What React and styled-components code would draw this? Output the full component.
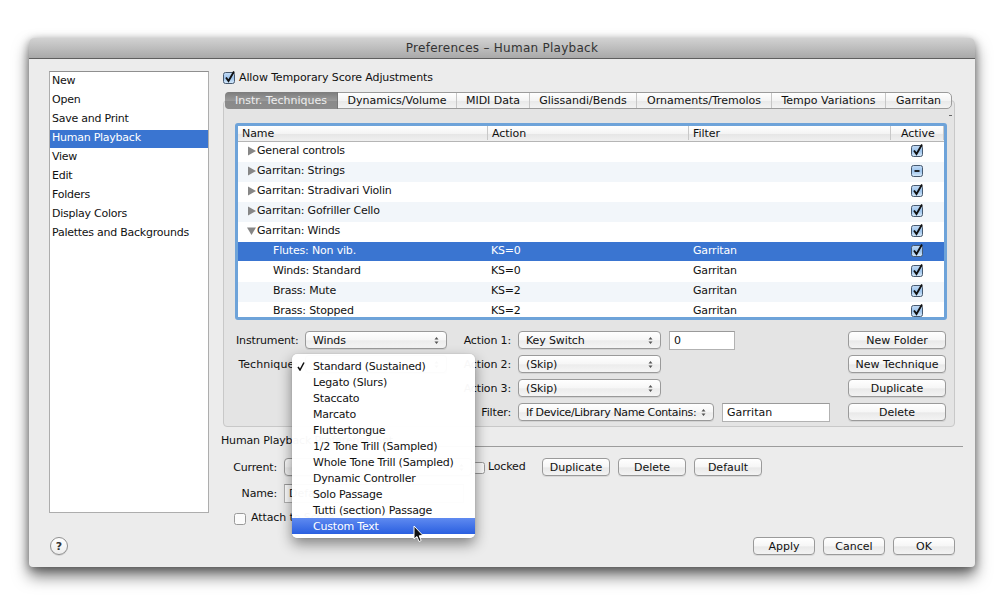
import React from 'react';
import styled, { createGlobalStyle } from 'styled-components';

const Global = createGlobalStyle`
  html, body { margin: 0; padding: 0; background: #fff; }
  body { font-family: "DejaVu Sans", "Liberation Sans", sans-serif; font-size: 11px; color: #111; }
  * { box-sizing: border-box; }
`;

const Page = styled.div`
  width: 1005px; height: 603px; padding: 38px 30px 36px 29px; overflow: hidden;
`;
const Window = styled.div`
  position: relative; width: 946px; height: 529px; display: flex; flex-direction: column;
  background: #ececec; border-radius: 5px 5px 4px 4px;
  box-shadow: 0 9px 16px rgba(0,0,0,.55), 0 2px 8px rgba(0,0,0,.35);
`;
const TitleBar = styled.div`
  height: 21px; flex: none; display: flex; align-items: center; justify-content: center;
  background: linear-gradient(#d2d2d2, #a9a9a9); border-bottom: 1px solid #5f5f5f;
  border-radius: 5px 5px 0 0; font-size: 12px; letter-spacing: .27px; color: #333;
`;
const Content = styled.div`
  flex: 1; display: flex; gap: 12px; padding: 12px 12px 0 20px; min-height: 0;
`;
const Sidebar = styled.ul`
  list-style: none; margin: 0; padding: 1px 0 0; width: 160px; height: 442px; flex: none;
  background: #fff; border: 1px solid #adadad; border-top-color: #8f8f8f;
`;
const SideItem = styled.li`
  height: 19px; padding: 0 2px; line-height: 16px; letter-spacing: -.25px;
  background: ${p => p.$on ? 'linear-gradient(#3a75d1 0 18px, #fff 18px)' : 'transparent'};
  color: ${p => p.$on ? '#fff' : '#111'};
`;
const Main = styled.div`flex: 1; min-width: 0; display: flex; flex-direction: column;`;
const AllowRow = styled.label`
  display: flex; align-items: center; gap: 2px; height: 16px; margin: -2px 0 7px 1px; letter-spacing: -.12px;
`;
const Panel = styled.div`
  position: relative; margin: 8px 8px 0 2px; height: 327px; padding: 0 7px 0 11px;
  background: #e4e4e4; border: 1px solid #c8c8c8; border-radius: 4px;
`;
const Tabs = styled.div`
  display: flex; width: 727px; height: 17px; margin: -9px 0 14px -10px;
  background: linear-gradient(#fff, #f4f4f4 50%, #e9e9e9 55%, #f3f3f3);
  border: 1px solid #9b9b9b; border-radius: 5px;
`;
const Tab = styled.div`
  width: ${p => p.$w}px; flex: none; display: flex; align-items: center; justify-content: center;
  color: ${p => p.$on ? '#eee' : '#111'};
  background: ${p => p.$on ? 'linear-gradient(#7c7c7c, #9a9a9a 50%, #8a8a8a 55%, #8c8c8c)' : 'transparent'};
  border-right: 1px solid ${p => p.$on ? '#777' : p.$last ? 'transparent' : '#c6c6c6'};
  border-radius: ${p => p.$on ? '4px 0 0 4px' : '0'};
  margin: ${p => p.$on ? '-1px 0 -1px -1px' : '0'};
  padding-bottom: 1px;
`;
const TabMark = styled.span`
  position: absolute; right: 2px; top: 14px; width: 3px; height: 1px; background: #666;
`;
const Table = styled.div`
  width: 712px; height: 197px; overflow: hidden; background: #fff;
  border: 3px solid #6ea3d9; border-radius: 3px;
`;
const HeaderRow = styled.div`
  display: flex; height: 16px; padding-bottom: 1px;
  background: linear-gradient(#fff, #f4f4f4 50%, #e6e6e6 55%, #f0f0f0);
  border-bottom: 1px solid #b5b5b5;
`;
const HeadCell = styled.div`
  width: ${p => p.$w}px; flex: none; padding-left: ${p => p.$pad}px; line-height: 16px;
  letter-spacing: -.05px; border-right: 1px solid #c8c8c8;
`;
const Row = styled.div`
  display: flex; height: 20px; align-items: flex-start; letter-spacing: -.18px;
  background: ${p => p.$sel ? 'linear-gradient(#3a75d1 0 19px, #fff 19px)' : p.$alt ? '#f2f6fa' : '#fff'};
  color: ${p => p.$sel ? '#fff' : '#111'};
`;
const NameCell = styled.div`
  width: 251px; flex: none; display: flex; align-items: center; height: 16px;
  padding-left: ${p => p.$child ? 35 : 9}px;
`;
const Disclosure = styled.span`
  width: 10px; flex: none; display: flex; align-items: center; margin-top: 2px;
`;
const ActionCell = styled.div`width: 202px; flex: none; line-height: 17px; padding-left: 2px;`;
const FilterCell = styled.div`width: 219px; flex: none; line-height: 17px; padding-left: 2px;`;
const ActiveCell = styled.div`width: 15px; height: 16px; margin-top: 1px; flex: none; display: flex;`;
const Form = styled.div`display: flex; margin: 11px 0 0 1px;`;
const LeftCol = styled.div`width: 211px; flex: none; display: flex; flex-direction: column; gap: 6px;`;
const MidCol = styled.div`width: 367px; margin-left: 16px; flex: none; display: flex; flex-direction: column; gap: 6px;`;
const ButtonCol = styled.div`width: 98px; margin-left: 18px; flex: none; display: flex; flex-direction: column; gap: 6px;`;
const FormRow = styled.div`display: flex; align-items: center; height: 18px; gap: 7px;`;
const FieldLabel = styled.span`
  width: ${p => p.$w}px; flex: none; text-align: right; white-space: nowrap; letter-spacing: ${p => p.$wide ? '.05px' : '-.15px'};
  padding-top: ${p => p.$flat ? 0 : 1}px;
`;
const Select = styled.div`
  width: ${p => p.$w}px; height: 18px; flex: none; display: flex; align-items: center; justify-content: space-between;
  margin-left: ${p => p.$ml || 0}px; padding: 0 7px 0 7px; white-space: nowrap; overflow: hidden;
  letter-spacing: ${p => p.$tight ? '-.36px' : '-.12px'};
  background: linear-gradient(#fff, #f6f6f6 50%, #ececec 55%, #f5f5f5);
  border: 1px solid #9a9a9a; border-radius: 4px; box-shadow: 0 1px 0 rgba(0,0,0,.08);
`;
const Input = styled.div`
  width: ${p => p.$w}px; height: 19px; flex: none; display: flex; align-items: center; padding: 0 3px 0 4px;
  margin-left: ${p => p.$ml || 0}px;
  background: #fff; border: 1px solid #b2b2b2; border-top-color: #9a9a9a; overflow: hidden; white-space: nowrap;
`;
const Button = styled.button`
  width: ${p => p.$w ? p.$w + 'px' : '100%'}; height: 18px; flex: none; padding: 0; margin: 0;
  font: inherit; color: #111; text-align: center;
  background: linear-gradient(#fff, #f6f6f6 50%, #e9e9e9 55%, #f3f3f3);
  border: 1px solid #9a9a9a; border-radius: 4px; box-shadow: 0 1px 0 rgba(0,0,0,.08);
`;
const Group = styled.div`display: flex; flex-direction: column;`;
const GroupHead = styled.div`display: flex; height: 16px; margin-top: 7px; white-space: nowrap; gap: 4px; letter-spacing: -.15px;`;
const GroupLine = styled.div`flex: 1; height: 6px; border-bottom: 1px solid #9c9c9c; margin-top: 7px;`;
const GroupRow = styled.div`
  display: flex; align-items: center; height: 18px; margin-top: ${p => p.$top}px; padding-left: ${p => p.$pad}px;
`;
const LockedLabel = styled.span`width: 54px; flex: none; margin-left: 1px; letter-spacing: -.15px; padding-bottom: 1px;`;
const AttachLabel = styled.span`margin-left: 3px; letter-spacing: -.1px; padding-bottom: 2px;`;
const Footer = styled.div`
  flex: none; height: 30px; display: flex; align-items: flex-start; justify-content: space-between; padding: 0 20px 12px 21px;
`;
const Help = styled.div`
  width: 18px; height: 18px; border-radius: 50%; display: flex; align-items: center; justify-content: center;
  background: linear-gradient(#fff, #ededed); border: 1px solid #8f8f8f; font-weight: 700; font-size: 11px; color: #333;
  box-shadow: 0 1px 0 rgba(0,0,0,.1);
`;
const ButtonRow = styled.div`display: flex; gap: 8px;`;
const Menu = styled.div`
  position: absolute; left: 263px; top: 316px; width: 183px; height: 184px; padding: 4px 0;
  background: rgba(255,255,255,.97); border-radius: 5px; box-shadow: 0 6px 14px rgba(0,0,0,.45), 0 0 1px rgba(0,0,0,.3);
`;
const MenuItem = styled.div`
  position: relative; height: 16px; padding-left: 21px; line-height: 17px; white-space: nowrap; letter-spacing: -.2px;
  background: ${p => p.$on ? 'linear-gradient(#5f8af0, #2a5fe0)' : 'transparent'};
  color: ${p => p.$on ? '#fff' : '#111'};
`;
const Check = styled.svg`position: absolute; left: 5px; top: 4px;`;
const Cursor = styled.svg`position: absolute; left: 384px; top: 487px;`;

const ChevronIcon = styled.svg`flex: none;`;
const Chevrons = () => (
  <ChevronIcon width="5" height="9" viewBox="0 0 5 9">
    <path d="M2.5 1 L4.5 3.5 H0.5 Z M2.5 8 L4.5 5.5 H0.5 Z" fill="#555" />
  </ChevronIcon>
);
const BoxIcon = styled.svg`flex: none;`;
const Box = ({ state }) => (
  <BoxIcon width="15" height="15" viewBox="0 0 15 15">
    <defs>
      <linearGradient id="cb" x1="0" y1="0" x2="0" y2="1">
        <stop offset="0" stopColor="#c5dcf5" /><stop offset=".5" stopColor="#9cc3ec" /><stop offset="1" stopColor="#d8ebfb" />
      </linearGradient>
    </defs>
    <rect x="1.5" y="2.5" width="11" height="11" rx="2" fill={state === 'off' ? '#fbfbfb' : 'url(#cb)'} stroke={state === 'off' ? '#9a9a9a' : '#47596f'} />
    {state === 'on' && <path d="M4 7.5 L6.5 11 L12 1.5" fill="none" stroke="#111" strokeWidth="1.9" />}
    {state === 'mixed' && <path d="M4.5 8 H9.5" stroke="#111" strokeWidth="1.8" />}
  </BoxIcon>
);
const Triangle = ({ open }) => (
  <svg width="9" height="10" viewBox="0 0 9 10">
    <path d={open ? 'M0 1.5 H9 L4.5 9 Z' : 'M1 0.5 L9 5 L1 9.5 Z'} fill="#868686" />
  </svg>
);

const tabs = [['Instr. Techniques', 113], ['Dynamics/Volume', 119], ['MIDI Data', 73], ['Glissandi/Bends', 107], ['Ornaments/Tremolos', 135], ['Tempo Variations', 114], ['Garritan', 66]];
const rows = [
  { n: 'General controls', t: 'c' },
  { n: 'Garritan: Strings', t: 'c', s: 'mixed' },
  { n: 'Garritan: Stradivari Violin', t: 'c' },
  { n: 'Garritan: Gofriller Cello', t: 'c' },
  { n: 'Garritan: Winds', t: 'o' },
  { n: 'Flutes: Non vib.', a: 'KS=0', f: 'Garritan', sel: true },
  { n: 'Winds: Standard', a: 'KS=0', f: 'Garritan' },
  { n: 'Brass: Mute', a: 'KS=2', f: 'Garritan' },
  { n: 'Brass: Stopped', a: 'KS=2', f: 'Garritan' },
];
const menu = ['Standard (Sustained)', 'Legato (Slurs)', 'Staccato', 'Marcato', 'Fluttertongue', '1/2 Tone Trill (Sampled)', 'Whole Tone Trill (Sampled)', 'Dynamic Controller', 'Solo Passage', 'Tutti (section) Passage', 'Custom Text'];
const side = ['New', 'Open', 'Save and Print', 'Human Playback', 'View', 'Edit', 'Folders', 'Display Colors', 'Palettes and Backgrounds'];

export default function App() {
  return (
    <Page>
      <Global />
      <Window>
        <TitleBar>Preferences – Human Playback</TitleBar>
        <Content>
          <Sidebar>{side.map(s => <SideItem key={s} $on={s === 'Human Playback'}>{s}</SideItem>)}</Sidebar>
          <Main>
            <AllowRow><Box state="on" />Allow Temporary Score Adjustments</AllowRow>
            <Panel>
              <Tabs>
                {tabs.map(([t, w], i) => <Tab key={t} $w={w} $on={i === 0} $last={i === tabs.length - 1}>{t}</Tab>)}
              </Tabs>
              <TabMark />
              <Table>
                <HeaderRow>
                  <HeadCell $w={250} $pad={4}>Name</HeadCell>
                  <HeadCell $w={201} $pad={4}>Action</HeadCell>
                  <HeadCell $w={202} $pad={4}>Filter</HeadCell>
                  <HeadCell $w={53} $pad={10}>Active</HeadCell>
                </HeaderRow>
                {rows.map((r, i) => (
                  <Row key={r.n} $alt={i % 2 === 1} $sel={r.sel}>
                    <NameCell $child={!r.t}>
                      {r.t && <Disclosure><Triangle open={r.t === 'o'} /></Disclosure>}
                      {r.n}
                    </NameCell>
                    <ActionCell>{r.a}</ActionCell>
                    <FilterCell>{r.f}</FilterCell>
                    <ActiveCell><Box state={r.s || 'on'} /></ActiveCell>
                  </Row>
                ))}
              </Table>
              <Form>
                <LeftCol>
                  <FormRow><FieldLabel $w={62}>Instrument:</FieldLabel><Select $w={142}>Winds<Chevrons /></Select></FormRow>
                  <FormRow><FieldLabel $w={62} $wide>Technique:</FieldLabel><Select $w={142}><span /><Chevrons /></Select></FormRow>
                </LeftCol>
                <MidCol>
                  <FormRow><FieldLabel $w={48}>Action 1:</FieldLabel><Select $w={143}>Key Switch<Chevrons /></Select><Input $w={66} $ml={1}>0</Input></FormRow>
                  <FormRow><FieldLabel $w={48}>Action 2:</FieldLabel><Select $w={143}>(Skip)<Chevrons /></Select></FormRow>
                  <FormRow><FieldLabel $w={48}>Action 3:</FieldLabel><Select $w={143}>(Skip)<Chevrons /></Select></FormRow>
                  <FormRow><FieldLabel $w={48}>Filter:</FieldLabel><Select $w={196} $tight>If Device/Library Name Contains:<Chevrons /></Select><Input $w={108} $ml={1}>Garritan</Input></FormRow>
                </MidCol>
                <ButtonCol>
                  <Button>New Folder</Button>
                  <Button>New Technique</Button>
                  <Button>Duplicate</Button>
                  <Button>Delete</Button>
                </ButtonCol>
              </Form>
            </Panel>
            <Group>
              <GroupHead>Human Playback Preference Set<GroupLine /></GroupHead>
              <GroupRow $top={8} $pad={12}>
                <FieldLabel $w={44} $flat>Current:</FieldLabel>
                <Select $w={188} $ml={7}><span /><Chevrons /></Select>
                <Box state="off" />
                <LockedLabel>Locked</LockedLabel>
                <ButtonRow>
                  <Button $w={68}>Duplicate</Button>
                  <Button $w={68}>Delete</Button>
                  <Button $w={68}>Default</Button>
                </ButtonRow>
              </GroupRow>
              <GroupRow $top={8} $pad={12}>
                <FieldLabel $w={44}>Name:</FieldLabel>
                <Input $w={180} $ml={7}>Default</Input>
              </GroupRow>
              <GroupRow $top={7} $pad={12}>
                <Box state="off" />
                <AttachLabel>Attach to Score</AttachLabel>
              </GroupRow>
            </Group>
          </Main>
        </Content>
        <Footer>
          <Help>?</Help>
          <ButtonRow>
            <Button $w={62}>Apply</Button>
            <Button $w={62}>Cancel</Button>
            <Button $w={62}>OK</Button>
          </ButtonRow>
        </Footer>
        <Menu>
          {menu.map((m, i) => (
            <MenuItem key={m} $on={i === 10}>
              {i === 0 && (
                <Check width="8" height="9" viewBox="0 0 8 9">
                  <path d="M1 5 L3 8 L7 0.5" fill="none" stroke="#111" strokeWidth="1.5" />
                </Check>
              )}
              {m}
            </MenuItem>
          ))}
        </Menu>
        <Cursor width="12" height="18" viewBox="0 0 12 18">
          <path d="M1 1 V14 L4 11.5 L6 16.5 L8.2 15.5 L6.2 10.8 L10 10.5 Z" fill="#111" stroke="#fff" strokeWidth="1" />
        </Cursor>
      </Window>
    </Page>
  );
}
